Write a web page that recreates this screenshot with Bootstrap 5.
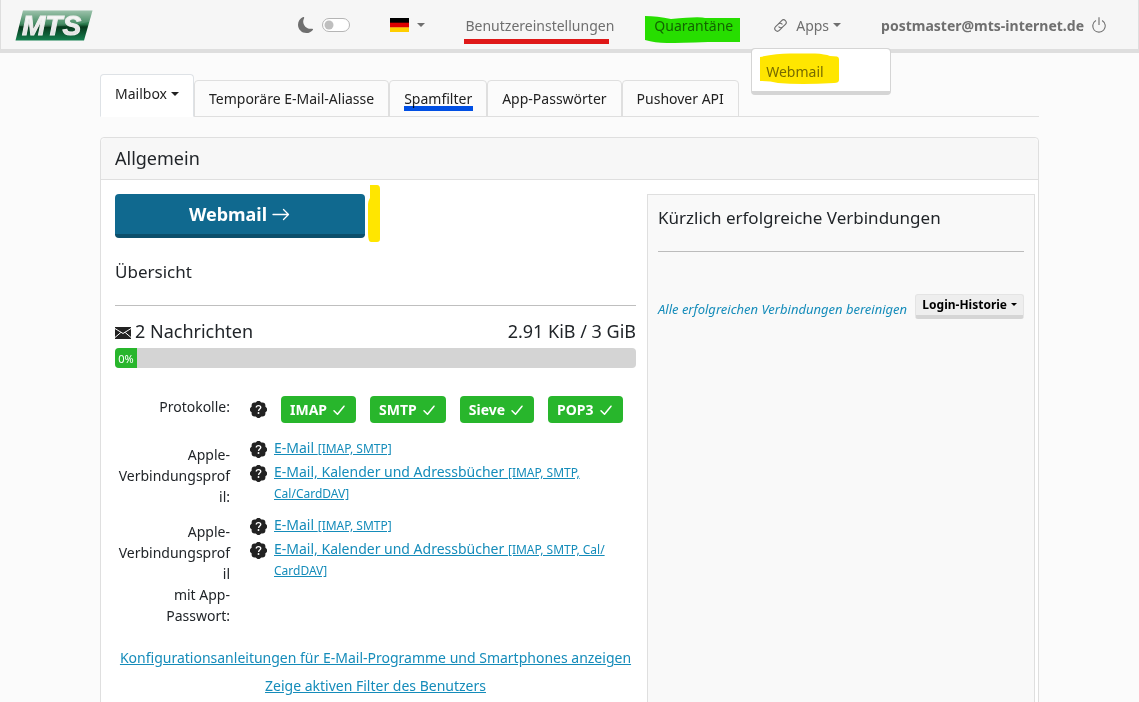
<!DOCTYPE html>
<html lang="de">
<head>
<meta charset="utf-8">
<meta name="viewport" content="width=device-width, initial-scale=1">
<title>MTS Benutzereinstellungen</title>
<link href="https://cdn.jsdelivr.net/npm/bootstrap@5.3.0/dist/css/bootstrap.min.css" rel="stylesheet">
<style>
  body { font: 14px/21px "Noto Sans", sans-serif; color: #212529; background: #fbfbfb; }
  a { color: #158cba; }
  svg { flex: none; }
  .topbar { background: #f6f6f6; border: 1px solid #dedede; border-width: 0 1px 4px; height: 53px; padding: 1px 30px 0 14px; }
  .topbar, .topbar .nav-link { color: #6f6f6f; }
  .topbar .nav-link { padding: 0; position: relative; }
  .top-items { gap: 40px; }
  .caret::after { content: ""; display: inline-block; border: 4px solid transparent; border-top-color: currentColor; border-bottom: 0; margin-left: 4px; vertical-align: 3px; }
  .mode-switch.form-check-input { width: 28px; height: 14px; margin: 0; border-color: #b5b5b5; }
  .marker { position: absolute; mix-blend-mode: multiply; pointer-events: none; z-index: 2; }
  .line-red { left: -1px; top: 24px; width: 145px; height: 5px; background: #e81818; }
  .line-blue { left: 14px; right: 13px; bottom: 5px; height: 5px; background: #0050e8; }
  .blob-green { left: -9px; top: 1px; }
  .blob-webmail { left: 8px; top: 4px; }
  .blob-button { left: 253px; top: -9px; }
  .apps-menu.dropdown-menu { left: -22px; top: 33px; min-width: 140px; padding: 0; border: 1px solid #d5d5d5; border-bottom-width: 4px; border-radius: 4px; font-size: 14px; }
  .apps-menu .dropdown-item { padding: 12px 14px 9px; line-height: 21px; color: #777; }
  .icon-power { margin-left: 6px; }
  .page { max-width: 939px; padding: 0; margin-top: 21px; }
  .nav-tabs { border-color: #dfdfdf; align-items: flex-end; }
  .nav-tabs .nav-link { color: #222; padding: 7px 14px; border: 1px solid #dfdfdf; border-radius: 4px 4px 0 0; position: relative; }
  .nav-tabs .nav-link.active { padding: 8px 14px 12px; border-bottom-color: #fff; color: #222; }
  .card { --bs-card-border-color: #dfdfdf; --bs-card-border-radius: 4px; margin-top: 20px; }
  .card-header { background: #f7f7f7; padding: 10px 14px; font-size: 18px; line-height: 21px; border-color: #dfdfdf; }
  .main-grid { display: grid; grid-template-columns: 521fr 388fr; gap: 11px; padding: 14px 3px 0 14px; }
  h2 { font-size: 17px; line-height: 20px; font-weight: 400; margin: 0; }
  hr { margin: 23px 0 0; border-color: #8b8b8b; opacity: .55; }
  .overview { margin-top: 24px; }
  .btn-mail { width: 250px; height: 44px; background: #10698f; color: #fff; font-size: 18px; font-weight: 700; border: 0; border-bottom: 4px solid #0c4f6b; border-radius: 4px; padding: 0; line-height: 20px; }
  .btn-mail:hover { background: #0e5f80; color: #fff; }
  .stats { font-size: 18px; line-height: 22px; margin-top: 14px; }
  .progress { height: 20px; margin-top: 6px; border-radius: 4px; background: #d4d4d4; }
  .progress-bar { background: #28b62c; font-size: 11px; min-width: 22px; }
  .details { margin: 28px 0 0; }
  .field { display: grid; grid-template-columns: 115px 1fr; column-gap: 20px; }
  .field dt { font-weight: 400; text-align: right; padding-left: 3px; overflow-wrap: anywhere; }
  .field dd { margin: 0; }
  .field-protocols { margin-bottom: 14px; }
  .field-profile { padding-bottom: 7px; }
  .field-profile dt { padding-top: 7px; }
  .protocols { gap: 14px; margin-left: 14px; }
  .proto { background: #28b62c; color: #fff; font-weight: 700; height: 27px; padding: 0 9px; border-radius: 4px; text-decoration: none; }
  .profile { gap: 7px; min-height: 24px; }
  .profile svg { margin-top: 4px; }
  .profile small { font-size: 12px; line-height: 12px; }
  .more-links { margin-top: 14px; }
  .more-links p { margin-bottom: 7px; }
  .history { background: #f9f9f9; border: 1px solid #dfdfdf; padding: 13px 10px; min-height: 540px; }
  .history-tools { margin-top: 42px; }
  .clear-history { font-size: 13px; margin-top: 5px; }
  .btn-history { background: #eee; border: 1px solid #e4e4e4; border-bottom: 4px solid #d5d5d5; border-radius: 3px; font-size: 12px; font-weight: 700; line-height: 18px; padding: 1px 6px; color: #000; }
  .btn-history.caret::after { border-width: 3px 3px 0; }
</style>
</head>
<body>
<svg class="d-none">
  <symbol id="help" viewBox="0 0 16 16"><path fill="#222" d="M5.933.87a2.89 2.89 0 0 1 4.134 0l.622.638.89-.011a2.89 2.89 0 0 1 2.924 2.924l-.01.89.636.622a2.89 2.89 0 0 1 0 4.134l-.637.622.011.89a2.89 2.89 0 0 1-2.924 2.924l-.89-.01-.622.636a2.89 2.89 0 0 1-4.134 0l-.622-.637-.89.011a2.89 2.89 0 0 1-2.924-2.924l.01-.89-.636-.622a2.89 2.89 0 0 1 0-4.134l.637-.622-.011-.89a2.89 2.89 0 0 1 2.924-2.924l.89.01z"/><path fill="none" stroke="#fff" stroke-width="1.300" d="M5.900 6.200c0-1.300.9-1.900 2.100-1.900s2.100.7 2.100 1.800c0 1.500-2 1.500-2 3.200"/><circle cx="8" cy="11.300" r=".9" fill="#fff"/></symbol>
  <symbol id="check" viewBox="0 0 16 16"><path fill="none" stroke="#fff" stroke-width="1.500" stroke-linecap="round" stroke-linejoin="round" d="M3 8.700l3.500 3.500 6.500-8"/></symbol>
</svg>

<nav class="topbar d-flex align-items-center">
  <a href="#" class="d-flex" aria-label="MTS">
    <svg width="78" height="31" viewBox="0 0 78 31">
      <defs>
        <linearGradient id="lg" x1="0" y1="0" x2="0" y2="1"><stop offset="0" stop-color="#8fbaa0"/><stop offset=".45" stop-color="#2d7d4f"/><stop offset=".55" stop-color="#07391c"/><stop offset="1" stop-color="#158050"/></linearGradient>
        <linearGradient id="lt" x1="0" y1="0" x2="0" y2="1"><stop offset="0" stop-color="#fff"/><stop offset="1" stop-color="#d8d8d8"/></linearGradient>
      </defs>
      <path d="M8 .5h69.500L69 30.500H.5z" fill="url(#lg)"/>
      <path d="M5 16Q40 19 74 12L77.500.5H8z" fill="#fff" opacity=".12"/>
      <text x="7" y="25" font-family="Liberation Sans, sans-serif" font-size="28" font-weight="700" font-style="italic" fill="url(#lt)" stroke="#eee" stroke-width="1">MTS</text>
    </svg>
  </a>
  <div class="top-items d-flex align-items-center ms-auto">
    <div class="d-flex align-items-center">
      <label for="dark" class="d-flex me-2" aria-label="Dunkelmodus"><svg width="16" height="16" viewBox="0 0 16 16"><path fill="#6f6f6f" d="M6 .278a.77.77 0 0 1 .08.858 7.200 7.200 0 0 0-.878 3.460c0 4.021 3.278 7.277 7.318 7.277q.792-.001 1.533-.16a.79.79 0 0 1 .81.316.73.73 0 0 1-.031.893A8.350 8.350 0 0 1 8.344 16C3.734 16 0 12.286 0 7.710 0 4.266 2.114 1.312 5.124.06A.75.75 0 0 1 6 .278"/></svg></label>
      <div class="form-switch p-0 d-flex"><input class="form-check-input mode-switch" type="checkbox" role="switch" id="dark"></div>
    </div>
    <a href="#" class="nav-link caret d-flex align-items-center" aria-label="Deutsch"><svg class="me-1" width="19" height="14" viewBox="0 0 19 14"><path d="M0 0h19v5H0z"/><path fill="#d00" d="M0 4.700h19v5H0z"/><path fill="#ffce00" d="M0 9.400h19V14H0z"/></svg></a>
    <a href="#" class="nav-link">Benutzereinstellungen<span class="marker line-red"></span></a>
    <a href="#" class="nav-link">Quarantäne<svg class="marker blob-green" width="95" height="28" viewBox="0 0 95 28"><path fill="#28e600" d="M0 0Q12 0 26 3Q55 0 60 2H95V26H63Q35 27 22 27Q10 27 0 24z"/></svg></a>
    <div class="position-relative">
      <a href="#" class="nav-link caret d-flex align-items-center"><svg class="me-2" width="15" height="15" viewBox="0 0 16 16"><g fill="none" stroke="#6f6f6f" stroke-width="1.200" stroke-linecap="round" transform="rotate(-45 8 8)"><path d="M7.500 10.800H3.400a2.800 2.800 0 0 1 0-5.600h4a2.800 2.800 0 0 1 2.800 3"/><path d="M8.500 5.200h4.100a2.800 2.800 0 0 1 0 5.600h-4a2.800 2.800 0 0 1-2.800-3"/></g></svg>Apps</a>
      <div class="dropdown-menu apps-menu show"><a class="dropdown-item" href="#">Webmail</a><svg class="marker blob-webmail" width="79" height="32" viewBox="0 0 79 32"><path fill="#ffe600" d="M0 4Q18 0 33 0.500H55Q65 1 70 3L77 3.500Q79 4 79 6V27Q79 30 74 30Q40 32 18 30Q10 28 0 28z"/></svg></div>
    </div>
    <a href="#" class="nav-link d-flex align-items-center"><b>postmaster@mts-internet.de</b><svg class="icon-power" width="18" height="18" viewBox="0 0 16 16" fill="#6f6f6f"><path d="M7.500 1v7h1V1z"/><path d="M3 8.812a5 5 0 0 1 2.578-4.375l-.485-.874A6 6 0 1 0 11 3.616l-.501.865A5 5 0 1 1 3 8.812"/></svg></a>
  </div>
</nav>

<main class="container page">
  <ul class="nav nav-tabs">
    <li class="nav-item"><a class="nav-link caret active" href="#">Mailbox</a></li>
    <li class="nav-item"><a class="nav-link" href="#">Temporäre E-Mail-Aliasse</a></li>
    <li class="nav-item"><a class="nav-link" href="#">Spamfilter<span class="marker line-blue"></span></a></li>
    <li class="nav-item"><a class="nav-link" href="#">App-Passwörter</a></li>
    <li class="nav-item"><a class="nav-link" href="#">Pushover API</a></li>
  </ul>

  <section class="card">
    <div class="card-header">Allgemein</div>
    <div class="main-grid">
      <div>
        <div class="position-relative">
          <a href="#" class="btn btn-mail d-flex align-items-center justify-content-center">Webmail <svg class="ms-1" width="20" height="18" viewBox="0 0 20 18"><path fill="none" stroke="#fff" stroke-width="1.300" stroke-linecap="round" stroke-linejoin="round" d="M2 9.500h15.500M12.500 4.500l5 5-5 5"/></svg></a>
          <svg class="marker blob-button" width="12" height="58" viewBox="0 0 12 58"><path fill="#ffe600" d="M2 0H9Q12 0 12 4V54Q12 57 9 57H3Q0 57 0 48V19Q0 16 2 13z"/></svg>
        </div>
        <h2 class="overview">Übersicht</h2>
        <hr>
        <div class="stats d-flex justify-content-between">
          <span><svg width="16" height="12" viewBox="0 0 16 12" class="me-1"><path fill="#222" d="M0 0h16v12H0z"/><path fill="none" stroke="#fff" d="M0 1.500l8 5 8-5M0 10.500l5.800-5M16 10.500l-5.800-5"/></svg>2 Nachrichten</span>
          <span>2.91 KiB / 3 GiB</span>
        </div>
        <div class="progress"><div class="progress-bar" role="progressbar" style="width:0%">0%</div></div>

        <dl class="details">
          <div class="field field-protocols">
            <dt>Protokolle:</dt>
            <dd class="d-flex align-items-center">
              <svg width="17" height="17"><use href="#help"/></svg>
              <div class="protocols d-flex">
                <a href="#" class="proto d-flex align-items-center">IMAP<svg class="ms-1" width="16" height="16"><use href="#check"/></svg></a>
                <a href="#" class="proto d-flex align-items-center">SMTP<svg class="ms-1" width="16" height="16"><use href="#check"/></svg></a>
                <a href="#" class="proto d-flex align-items-center">Sieve<svg class="ms-1" width="16" height="16"><use href="#check"/></svg></a>
                <a href="#" class="proto d-flex align-items-center">POP3<svg class="ms-1" width="16" height="16"><use href="#check"/></svg></a>
              </div>
            </dd>
          </div>
          <div class="field field-profile">
            <dt>Apple-Verbindungsprofil:</dt>
            <dd>
              <div class="profile d-flex"><svg width="17" height="17"><use href="#help"/></svg><a href="#">E-Mail <small>[IMAP, SMTP]</small></a></div>
              <div class="profile d-flex"><svg width="17" height="17"><use href="#help"/></svg><a href="#">E-Mail, Kalender und Adressbücher <small>[IMAP, SMTP, Cal/CardDAV]</small></a></div>
            </dd>
          </div>
          <div class="field field-profile">
            <dt>Apple-Verbindungsprofil<br>mit App-Passwort:</dt>
            <dd>
              <div class="profile d-flex"><svg width="17" height="17"><use href="#help"/></svg><a href="#">E-Mail <small>[IMAP, SMTP]</small></a></div>
              <div class="profile d-flex"><svg width="17" height="17"><use href="#help"/></svg><a href="#">E-Mail, Kalender und Adressbücher <small>[IMAP, SMTP, Cal/<wbr>CardDAV]</small></a></div>
            </dd>
          </div>
        </dl>
        <div class="more-links text-center">
          <p><a href="#">Konfigurationsanleitungen für E-Mail-Programme und Smartphones anzeigen</a></p>
          <p><a href="#">Zeige aktiven Filter des Benutzers</a></p>
        </div>
      </div>
      <aside class="history">
        <h2>Kürzlich erfolgreiche Verbindungen</h2>
        <hr>
        <div class="history-tools d-flex justify-content-between align-items-start">
          <a href="#" class="clear-history fst-italic text-decoration-none">Alle erfolgreichen Verbindungen bereinigen</a>
          <button type="button" class="btn btn-history caret">Login-Historie</button>
        </div>
      </aside>
    </div>
  </section>
</main>
<script src="https://cdn.jsdelivr.net/npm/bootstrap@5.3.0/dist/js/bootstrap.bundle.min.js"></script>
</body>
</html>
